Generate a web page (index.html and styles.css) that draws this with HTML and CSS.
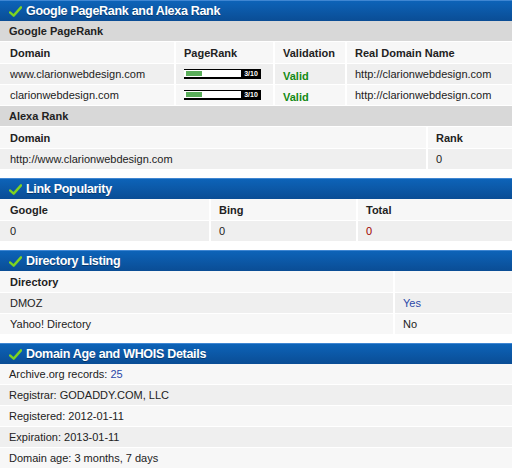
FILE: index.html
```html
<!DOCTYPE html>
<html>
<head>
<meta charset="utf-8">
<link rel="stylesheet" href="styles.css">
</head>
<body>
<div class="page">
  <section class="box">
    <h2 class="bar"><svg class="chk" viewBox="0 0 14 12"><path d="M1 7 L5 10.5 L13 1.5" fill="none" stroke="#7ed321" stroke-width="2.6" stroke-linecap="round" stroke-linejoin="round"/></svg>Google PageRank and Alexa Rank</h2>
    <div class="sub">Google PageRank</div>
    <table class="t">
      <tr class="th"><td class="c1">Domain</td><td class="c2">PageRank</td><td class="c3">Validation</td><td>Real Domain Name</td></tr>
      <tr class="odd"><td>www.clarionwebdesign.com</td><td><span class="pr"><span class="fill"></span><span class="num">3/10</span></span></td><td class="valid">Valid</td><td>http://clarionwebdesign.com</td></tr>
      <tr class="even"><td>clarionwebdesign.com</td><td><span class="pr"><span class="fill"></span><span class="num">3/10</span></span></td><td class="valid">Valid</td><td>http://clarionwebdesign.com</td></tr>
    </table>
    <div class="sub">Alexa Rank</div>
    <table class="t">
      <tr class="th"><td class="a1">Domain</td><td>Rank</td></tr>
      <tr class="odd"><td>http://www.clarionwebdesign.com</td><td>0</td></tr>
    </table>
  </section>

  <section class="box">
    <h2 class="bar"><svg class="chk" viewBox="0 0 14 12"><path d="M1 7 L5 10.5 L13 1.5" fill="none" stroke="#7ed321" stroke-width="2.6" stroke-linecap="round" stroke-linejoin="round"/></svg>Link Popularity</h2>
    <table class="t">
      <tr class="th"><td class="l1">Google</td><td class="l2">Bing</td><td>Total</td></tr>
      <tr class="odd"><td>0</td><td class="plain">0</td><td class="red">0</td></tr>
    </table>
  </section>

  <section class="box">
    <h2 class="bar"><svg class="chk" viewBox="0 0 14 12"><path d="M1 7 L5 10.5 L13 1.5" fill="none" stroke="#7ed321" stroke-width="2.6" stroke-linecap="round" stroke-linejoin="round"/></svg>Directory Listing</h2>
    <table class="t">
      <tr class="th"><td class="d1">Directory</td><td></td></tr>
      <tr class="odd"><td>DMOZ</td><td class="blue">Yes</td></tr>
      <tr class="even"><td>Yahoo! Directory</td><td>No</td></tr>
    </table>
  </section>

  <section class="box">
    <h2 class="bar"><svg class="chk" viewBox="0 0 14 12"><path d="M1 7 L5 10.5 L13 1.5" fill="none" stroke="#7ed321" stroke-width="2.6" stroke-linecap="round" stroke-linejoin="round"/></svg>Domain Age and WHOIS Details</h2>
    <div class="list">
      <div class="row even">Archive.org records: <span class="blue">25</span></div>
      <div class="row odd">Registrar: GODADDY.COM, LLC</div>
      <div class="row even">Registered: 2012-01-11</div>
      <div class="row odd">Expiration: 2013-01-11</div>
      <div class="row even">Domain age: 3 months, 7 days</div>
    </div>
  </section>
</div>
</body>
</html>
```

FILE: styles.css
```css
html, body {
  margin: 0;
  padding: 0;
  background: #ffffff;
}
body {
  font-family: "Liberation Sans", Arial, sans-serif;
  font-size: 11px;
  color: #222222;
}
.page {
  width: 512px;
  display: flex;
  flex-direction: column;
  gap: 8px;
}
.box {
  display: flex;
  flex-direction: column;
}
.bar {
  margin: 0;
  height: 21px;
  box-sizing: border-box;
  border-top: 1px solid #3f86d2;
  background: linear-gradient(#0d63b8, #0a4d95);
  color: #ffffff;
  font-size: 12.5px;
  letter-spacing: -0.3px;
  font-weight: bold;
  display: flex;
  align-items: center;
  padding-left: 9px;
  gap: 4px;
  text-shadow: 0 1px 0 rgba(0,0,0,0.35);
}
.chk {
  width: 13px;
  height: 11px;
}
.sub {
  background: #d8d8d8;
  font-weight: bold;
  height: 20px;
  line-height: 20px;
  padding-left: 9px;
  border-bottom: 1px solid #ffffff;
}
.t {
  width: 100%;
  border-collapse: separate;
  border-spacing: 0;
  table-layout: fixed;
}
.t td {
  box-sizing: border-box;
  height: 21px;
  padding: 0 0 0 8px;
  border-bottom: 1px solid #ffffff;
  border-left: 2px solid #ffffff;
  white-space: nowrap;
  overflow: hidden;
  vertical-align: middle;
  color: #222222;
}
.t td:first-child {
  border-left: none;
  padding-left: 10px;
}
.th td {
  background: #f7f7f7;
  font-weight: bold;
  height: 22px;
}
.odd td, .row.odd {
  background: #efefef;
}
.even td, .row.even {
  background: #f7f7f7;
}
.c1 { width: 174px; }
.c2 { width: 99px; }
.c3 { width: 72px; }
.a1 { width: 426px; }
.l1 { width: 209px; }
.l2 { width: 147px; }
.d1 { width: 393px; }
.t td.valid {
  color: #138a13;
  font-weight: bold;
  padding-top: 3px;
}
.t td.plain { color: #222222; }
.t td.red { color: #a00000; }
.blue, .t td.blue { color: #2b48a8; }
.pr {
  display: flex;
  width: 77px;
  height: 10px;
  box-sizing: border-box;
  border-top: 1px solid #000;
  border-bottom: 2px solid #000;
  background: #ffffff;
}
.pr .fill {
  width: 16px;
  margin-left: 2px;
  margin-top: 1px;
  height: 5px;
  background: #5aad5a;
}
.pr .num {
  margin-left: auto;
  width: 20px;
  background: #000;
  color: #fff;
  font-size: 7px;
  font-weight: bold;
  line-height: 7px;
  text-align: center;
}
.list {
  display: flex;
  flex-direction: column;
}
.row {
  height: 20px;
  line-height: 20px;
  padding-left: 9px;
  border-bottom: 1px solid #ffffff;
}
```
